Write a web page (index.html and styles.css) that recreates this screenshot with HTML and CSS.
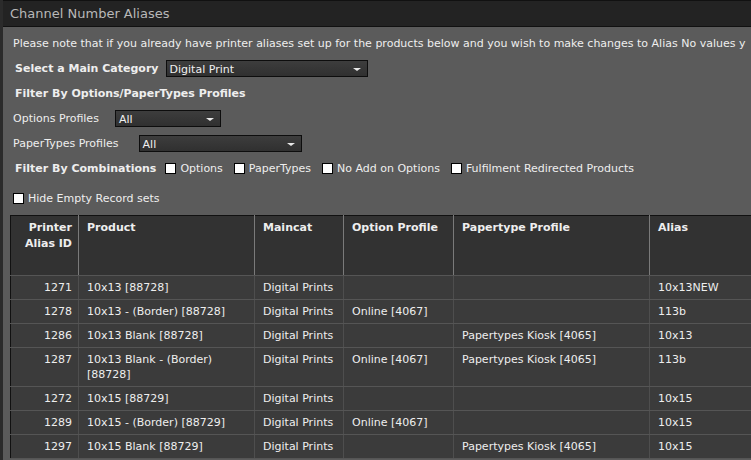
FILE: index.html
```html
<!DOCTYPE html>
<html>
<head>
<title>Channel Number Aliases</title>
<link rel="stylesheet" href="styles.css">
</head>
<body>
<div class="page">
<div class="titlebar">Channel Number Aliases</div>
<div class="content">
<div class="line note">Please note that if you already have printer aliases set up for the products below and you wish to make changes to Alias No values y</div>
<div class="line bold-row">
<b class="main-lbl">Select a Main Category</b>
<div class="select sel-main">Digital Print<span class="arrow"></span></div>
</div>
<div class="line bold-row"><b>Filter By Options/PaperTypes Profiles</b></div>
<div class="line">
<span class="lbl">Options Profiles</span>
<div class="select sel-opt">All<span class="arrow"></span></div>
</div>
<div class="line">
<span class="lbl lbl-pt">PaperTypes Profiles</span>
<div class="select sel-pt">All<span class="arrow"></span></div>
</div>
<div class="line bold-row">
<b>Filter By Combinations</b>
<label class="chk"><span class="box"></span>Options</label>
<label class="chk"><span class="box"></span>PaperTypes</label>
<label class="chk"><span class="box"></span>No Add on Options</label>
<label class="chk"><span class="box"></span>Fulfilment Redirected Products</label>
</div>
<div class="line hide-row">
<label class="chk"><span class="box"></span>Hide Empty Record sets</label>
</div>
<table class="grid">
<thead>
<tr>
<th class="c-id">Printer<br>Alias ID</th>
<th class="c-prod">Product</th>
<th class="c-cat">Maincat</th>
<th class="c-opt">Option Profile</th>
<th class="c-pt">Papertype Profile</th>
<th class="c-alias">Alias</th>
</tr>
</thead>
<tbody>
<tr><td class="c-id">1271</td><td>10x13 [88728]</td><td>Digital Prints</td><td></td><td></td><td>10x13NEW</td></tr>
<tr><td class="c-id">1278</td><td>10x13 - (Border) [88728]</td><td>Digital Prints</td><td>Online [4067]</td><td></td><td>113b</td></tr>
<tr><td class="c-id">1286</td><td>10x13 Blank [88728]</td><td>Digital Prints</td><td></td><td>Papertypes Kiosk [4065]</td><td>10x13</td></tr>
<tr><td class="c-id">1287</td><td>10x13 Blank - (Border)<br>[88728]</td><td>Digital Prints</td><td>Online [4067]</td><td>Papertypes Kiosk [4065]</td><td>113b</td></tr>
<tr><td class="c-id">1272</td><td>10x15 [88729]</td><td>Digital Prints</td><td></td><td></td><td>10x15</td></tr>
<tr><td class="c-id">1289</td><td>10x15 - (Border) [88729]</td><td>Digital Prints</td><td>Online [4067]</td><td></td><td>10x15</td></tr>
<tr><td class="c-id">1297</td><td>10x15 Blank [88729]</td><td>Digital Prints</td><td></td><td>Papertypes Kiosk [4065]</td><td>10x15</td></tr>
</tbody>
</table>
</div>
</div>
</body>
</html>
```

FILE: styles.css
```css
body {
  margin: 0;
  background: #5b5b5b;
  color: #eeeeee;
  font-family: "DejaVu Sans", Verdana, sans-serif;
  font-size: 11px;
  overflow: hidden;
}
.page {
  width: 751px;
  height: 460px;
  overflow: hidden;
  border-left: 3px solid #2b2b2b;
  box-sizing: border-box;
}
.titlebar {
  height: 27px;
  line-height: 25px;
  background: #232323;
  border-top: 1px solid #111111;
  border-bottom: 1px solid #111111;
  color: #b8b8b8;
  font-size: 13px;
  padding-left: 7px;
  box-sizing: border-box;
}
.content {
  padding: 4px 0 0 7px;
}
.line {
  height: 25px;
  display: flex;
  align-items: center;
  white-space: nowrap;
  padding-left: 3px;
}
.bold-row {
  padding-left: 5px;
}
.bold-row b {
  margin-right: 9px;
}
.bold-row .main-lbl {
  margin-right: 7px;
}
.lbl {
  margin-right: 16px;
}
.lbl-pt {
  margin-right: 20px;
}
.select {
  position: relative;
  height: 17px;
  line-height: 17px;
  background: linear-gradient(#3d3d3d, #303030);
  border: 1px solid #0d0d0d;
  padding-left: 3px;
  box-sizing: border-box;
  color: #f0f0f0;
}
.sel-main { width: 202px; }
.sel-opt { width: 106px; }
.sel-pt { width: 163px; }
.select .arrow {
  position: absolute;
  right: 6px;
  top: 7px;
  width: 0;
  height: 0;
  border-left: 4px solid transparent;
  border-right: 4px solid transparent;
  border-top: 3px solid #e8e8e8;
}
.chk {
  display: flex;
  align-items: center;
  margin-right: 11px;
}
.chk .box {
  width: 9px;
  height: 9px;
  background: #ffffff;
  border: 1px solid #000000;
  margin-right: 4px;
}
.hide-row {
  margin-top: 5px;
}
.grid {
  margin-top: 4px;
  border-collapse: collapse;
  width: 900px;
  table-layout: fixed;
  border: 1px solid #111111;
}
.grid th {
  background: #323232;
  height: 60px;
  box-sizing: border-box;
  vertical-align: top;
  text-align: left;
  padding: 4px 8px;
  line-height: 16px;
  border-right: 1px solid #7a7a7a;
  border-bottom: 1px solid #555555;
}
.grid td {
  background: #3b3b3b;
  vertical-align: top;
  padding: 4px 8px;
  line-height: 15px;
  border-right: 1px solid #4e4e4e;
  border-bottom: 1px solid #555555;
  white-space: nowrap;
}
.grid .c-id {
  width: 68px;
  text-align: right;
  padding-right: 6px;
}
.grid .c-prod { width: 176px; }
.grid .c-cat { width: 89px; }
.grid .c-opt { width: 110px; }
.grid .c-pt { width: 196px; }
```
